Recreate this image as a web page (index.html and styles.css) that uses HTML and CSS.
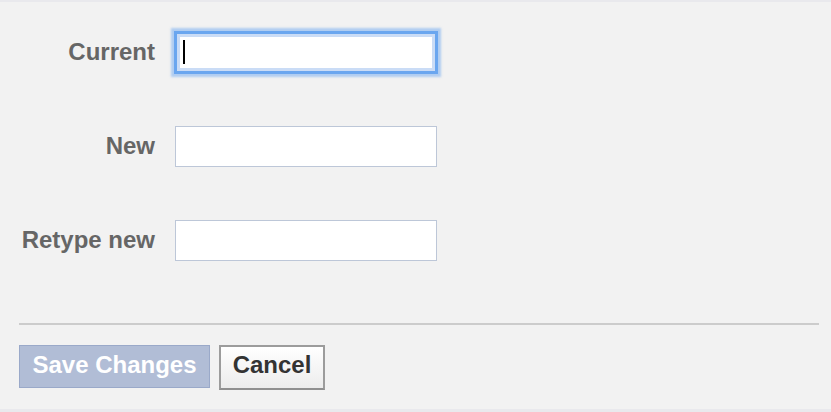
FILE: index.html
```html
<!DOCTYPE html>
<html>
<head>
<meta charset="utf-8">
<link rel="stylesheet" href="styles.css">
</head>
<body>
<div class="page">
  <div class="topbar"></div>
  <main class="main">
    <form class="form">
      <div class="row">
        <label class="label">Current</label>
        <div class="field focused">
          <input class="input" type="password">
          <span class="caret"></span>
        </div>
      </div>
      <div class="row">
        <label class="label">New</label>
        <div class="field"><input class="input" type="password"></div>
      </div>
      <div class="row">
        <label class="label">Retype new</label>
        <div class="field"><input class="input" type="password"></div>
      </div>
    </form>
    <div class="separator"></div>
    <div class="actions">
      <button class="btn btn-save" type="button">Save Changes</button>
      <button class="btn btn-cancel" type="button">Cancel</button>
    </div>
  </main>
  <div class="bottombar"></div>
</div>
</body>
</html>
```
FILE: styles.css
```css
html, body {
  margin: 0;
  padding: 0;
  height: 100%;
}
body {
  background: #f2f2f2;
  font-family: "Liberation Sans", Arial, Helvetica, sans-serif;
}
.page {
  display: flex;
  flex-direction: column;
  height: 412px;
}
.topbar {
  height: 2px;
  background: #e9e9ed;
}
.bottombar {
  height: 3px;
  background: #e9e9ed;
}
.main {
  flex: 1;
  padding: 30px 12px 0 19px;
}
.form {
  display: flex;
  flex-direction: column;
  gap: 53px;
  margin: 0;
}
.row {
  display: flex;
  align-items: center;
  gap: 20px;
  height: 41px;
}
.label {
  width: 136px;
  text-align: right;
  font-size: 24px;
  font-weight: bold;
  color: #666666;
  line-height: 28px;
  margin-top: -2px;
  white-space: nowrap;
}
.field {
  position: relative;
  width: 262px;
  height: 41px;
}
.input {
  box-sizing: border-box;
  width: 262px;
  height: 41px;
  margin: 0;
  border: 1px solid #bdc7d8;
  background: #ffffff;
  outline: none;
  padding: 0 6px;
  font-size: 20px;
}
.focused .input {
  border: 2px solid #6aa6ef;
  box-shadow: inset 0 0 0 3px #cadcf6, 0 0 0 1px #6aa6ef, 0 0 2px 4px rgba(110, 168, 240, 0.5);
}
.caret {
  position: absolute;
  left: 8px;
  top: 8px;
  width: 2px;
  height: 24px;
  background: #000000;
}
.separator {
  height: 2px;
  background: #cccccc;
  margin-top: 62px;
}
.actions {
  display: flex;
  align-items: flex-start;
  gap: 9px;
  margin-top: 20px;
}
.btn {
  font-family: "Liberation Sans", Arial, Helvetica, sans-serif;
  font-weight: bold;
  font-size: 24px;
  line-height: 28px;
  margin: 0;
  cursor: pointer;
}
.btn-save {
  box-sizing: border-box;
  width: 191px;
  height: 43px;
  padding: 0 0 4px;
  background: #b1bdd6;
  border: 1px solid #9aa9c9;
  color: #ffffff;
}
.btn-cancel {
  box-sizing: border-box;
  width: 106px;
  height: 45px;
  padding: 0 0 6px;
  background: linear-gradient(#ffffff, #ececec);
  border: 2px solid #9c9c9c;
  border-bottom-color: #8f8f8f;
  color: #333333;
}
```
